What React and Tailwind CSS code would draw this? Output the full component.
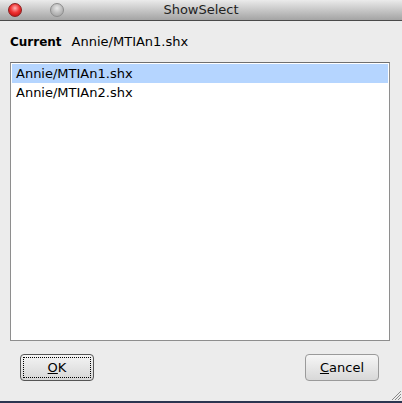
export default function App() {
  const font = { fontFamily: '"DejaVu Sans", "Lucida Grande", sans-serif' };
  return (
    <div className="w-[402px] h-[403px] flex flex-col bg-[#ececec] overflow-hidden text-[13px] text-black" style={font}>
      {/* Title bar */}
      <div className="relative h-[21px] shrink-0 bg-gradient-to-b from-[#ebebeb] to-[#a4a4a4] border-b border-[#4a4a4a] flex items-center justify-center">
        <div className="absolute left-[8px] top-[3px] w-[14px] h-[14px] rounded-full bg-[radial-gradient(circle_at_50%_35%,#ffb3b3_0%,#f03434_45%,#b30000_100%)] border border-[#8a2020]" />
        <div className="absolute left-[50px] top-[3px] w-[14px] h-[14px] rounded-full bg-[radial-gradient(circle_at_50%_35%,#e8e8e8_0%,#bdbdbd_50%,#9a9a9a_100%)] border border-[#8c8c8c]" />
        <span className="text-[13px] text-[#222]">ShowSelect</span>
      </div>
      {/* Content */}
      <div className="flex-1 flex flex-col px-[10px]">
        <div className="flex items-center h-[41px] pt-[1px]">
          <span className="font-bold text-[12px]">Current</span>
          <span className="ml-[10px] text-[13px]">Annie/MTIAn1.shx</span>
        </div>
        <div className="w-[380px] h-[279px] bg-white border border-[#8e8e8e] border-t-[#6f6f6f] p-[1px] flex flex-col">
          <div className="h-[19px] bg-[#b5d5ff] flex items-center pl-[4px]">Annie/MTIAn1.shx</div>
          <div className="h-[19px] flex items-center pl-[4px]">Annie/MTIAn2.shx</div>
        </div>
        <div className="flex justify-between mt-[13px] pl-[10px] pr-[13px]">
          <button className="w-[74px] h-[27px] rounded-[4px] border border-[#555] bg-gradient-to-b from-[#f4f4f4] to-[#d6d6d6] p-[2px]">
            <div className="w-full h-full border border-dotted border-black flex items-center justify-center">
              <span><span className="underline">O</span>K</span>
            </div>
          </button>
          <button className="w-[74px] h-[27px] rounded-[4px] border border-[#9a9a9a] bg-gradient-to-b from-[#f6f6f6] to-[#d8d8d8] flex items-center justify-center">
            <span><span className="underline">C</span>ancel</span>
          </button>
        </div>
        <div className="flex-1" />
      </div>
      <div className="relative h-[2px] bg-[#2b3550] shrink-0">
        <svg className="absolute right-0 bottom-[2px]" width="12" height="12" viewBox="0 0 12 12">
          <path d="M11 2 L2 11 M11 5 L5 11 M11 8 L8 11" stroke="#888" strokeWidth="1" />
        </svg>
      </div>
    </div>
  );
}
